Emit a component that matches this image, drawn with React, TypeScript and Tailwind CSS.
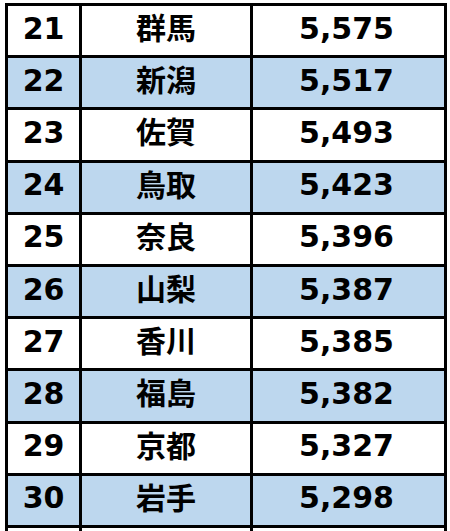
const rows = [
  { rank: "21", pref: "群馬", value: "5,575" },
  { rank: "22", pref: "新潟", value: "5,517" },
  { rank: "23", pref: "佐賀", value: "5,493" },
  { rank: "24", pref: "鳥取", value: "5,423" },
  { rank: "25", pref: "奈良", value: "5,396" },
  { rank: "26", pref: "山梨", value: "5,387" },
  { rank: "27", pref: "香川", value: "5,385" },
  { rank: "28", pref: "福島", value: "5,382" },
  { rank: "29", pref: "京都", value: "5,327" },
  { rank: "30", pref: "岩手", value: "5,298" },
  { rank: "", pref: "", value: "" },
];

export default function App() {
  return (
    <div className="w-[450px] h-[531px] overflow-hidden bg-white pl-[5px] pt-[3px]">
      <div className="grid w-[442px] grid-cols-[71px_168px_191px] gap-[3px] bg-black p-[3px]">
        {rows.map((r, i) => {
          const bg = i % 2 === 1 ? "bg-[#bdd7ee]" : "bg-white";
          return (
            <div key={i} className="contents">
              <div
                className={`${bg} flex h-[49.2px] items-center justify-center pb-[4px] text-[30px] leading-none font-bold text-black`}
                style={{ fontFamily: '"DejaVu Sans", Verdana, sans-serif' }}
              >
                {r.rank}
              </div>
              <div
                className={`${bg} flex h-[49.2px] items-center justify-center pb-[9px] text-[30px] leading-none font-bold text-black`}
                style={{ fontFamily: '"Noto Sans CJK JP", sans-serif' }}
              >
                {r.pref}
              </div>
              <div
                className={`${bg} flex h-[49.2px] items-center justify-center pb-[4px] pr-[4px] text-[30px] leading-none font-bold text-black`}
                style={{ fontFamily: '"DejaVu Sans", Verdana, sans-serif' }}
              >
                {r.value}
              </div>
            </div>
          );
        })}
      </div>
    </div>
  );
}
